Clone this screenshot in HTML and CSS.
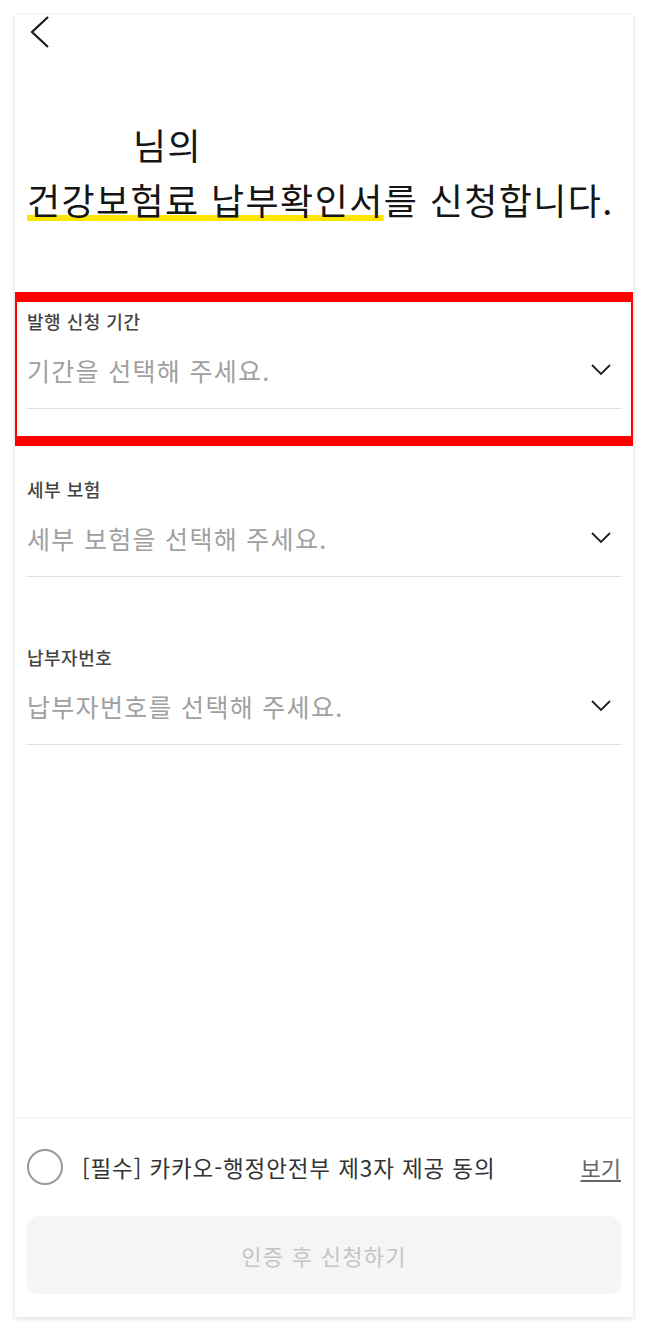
FILE: index.html
```html
<!DOCTYPE html>
<html lang="ko">
<head>
<meta charset="utf-8">
<title>건강보험료 납부확인서 신청</title>
<link rel="stylesheet" href="styles.css">
</head>
<body>
<div class="card">
  <header class="topbar">
    <button class="back" type="button" aria-label="뒤로">
      <svg width="20" height="32" viewBox="0 0 20 32"><polyline points="18,1 2,16 18,31" fill="none" stroke="#1a1a1a" stroke-width="2.2"/></svg>
    </button>
  </header>

  <h1 class="title"><span class="name"></span>님의<br><span class="mark">건강보험료 납부확인서</span>를 신청합니다.</h1>

  <div class="fields">
    <div class="field is-highlight">
      <div class="label">발행 신청 기간</div>
      <div class="select">
        <span class="placeholder">기간을 선택해 주세요.</span>
        <svg class="chev" width="20" height="12" viewBox="0 0 20 12"><polyline points="1,1 10,10 19,1" fill="none" stroke="#222" stroke-width="1.8"/></svg>
      </div>
    </div>
    <div class="field">
      <div class="label">세부 보험</div>
      <div class="select">
        <span class="placeholder">세부 보험을 선택해 주세요.</span>
        <svg class="chev" width="20" height="12" viewBox="0 0 20 12"><polyline points="1,1 10,10 19,1" fill="none" stroke="#222" stroke-width="1.8"/></svg>
      </div>
    </div>
    <div class="field">
      <div class="label">납부자번호</div>
      <div class="select">
        <span class="placeholder">납부자번호를 선택해 주세요.</span>
        <svg class="chev" width="20" height="12" viewBox="0 0 20 12"><polyline points="1,1 10,10 19,1" fill="none" stroke="#222" stroke-width="1.8"/></svg>
      </div>
    </div>
  </div>

  <div class="spacer"></div>

  <footer class="footer">
    <div class="agree">
      <span class="check"></span>
      <span class="agree-text">[필수] 카카오-행정안전부 제3자 제공 동의</span>
      <a class="view" href="#">보기</a>
    </div>
    <button class="submit" type="button">인증 후 신청하기</button>
  </footer>
</div>
</body>
</html>
```

FILE: styles.css
```css
* { box-sizing: border-box; }

html, body {
  margin: 0;
  background: #ffffff;
}

body {
  padding: 15px;
  font-family: "Noto Sans CJK KR", "Noto Sans", sans-serif;
  color: #1a1a1a;
}

.card {
  width: 618px;
  height: 1302px;
  display: flex;
  flex-direction: column;
  background: #fff;
  box-shadow: 0 1px 5px rgba(0, 0, 0, 0.16);
}

.topbar {
  height: 34px;
  padding: 1px 0 0 15px;
}

.back {
  display: block;
  padding: 0;
  margin: 0;
  border: 0;
  background: none;
  width: 20px;
  height: 32px;
}

.back svg { display: block; }

.title {
  margin: 68px 0 0;
  padding: 0 12px;
  font-size: 36px;
  line-height: 55px;
  font-weight: 400;
  color: #151515;
  letter-spacing: 1.4px;
}

.name {
  display: inline-block;
  width: 106px;
}

.mark {
  text-decoration: underline;
  text-decoration-color: #fee500;
  text-decoration-thickness: 6px;
  text-underline-offset: 0px;
  text-decoration-skip-ink: none;
}

.fields {
  margin-top: 65px;
  display: flex;
  flex-direction: column;
  gap: 14px;
}

.field {
  border-style: solid;
  border-color: transparent;
  border-width: 10px 2px;
  padding: 7px 10px 27px;
}

.field.is-highlight {
  border-color: #ff0000;
}

.label {
  font-size: 18px;
  line-height: 24px;
  font-weight: 500;
  color: #444;
  letter-spacing: 0.5px;
}

.select {
  margin-top: 20px;
  display: flex;
  align-items: center;
  justify-content: space-between;
  padding: 0 10px 21px 0;
  border-bottom: 1px solid #dedede;
}

.placeholder {
  font-size: 25px;
  line-height: 34px;
  color: #a0a0a0;
  letter-spacing: 1.3px;
}

.chev { display: block; }

.spacer { flex: 1; }

.footer {
  border-top: 1px solid #f1f1f1;
  padding: 0 12px 23px;
}

.agree {
  height: 98px;
  display: flex;
  align-items: center;
}

.check {
  width: 36px;
  height: 36px;
  border: 2px solid #999;
  border-radius: 50%;
  margin-right: 19px;
  flex: none;
}

.agree-text {
  flex: 1;
  font-size: 22.5px;
  color: #333;
  letter-spacing: 0.9px;
}

.view {
  font-size: 22px;
  color: #666;
  text-decoration: underline;
  text-underline-offset: 3px;
}

.submit {
  display: block;
  width: 100%;
  height: 78px;
  border: 0;
  border-radius: 12px;
  background: #f5f5f5;
  color: #c4c4c4;
  font-family: "Noto Sans CJK KR", "Noto Sans", sans-serif;
  font-size: 22px;
  letter-spacing: 1.3px;
}
```
